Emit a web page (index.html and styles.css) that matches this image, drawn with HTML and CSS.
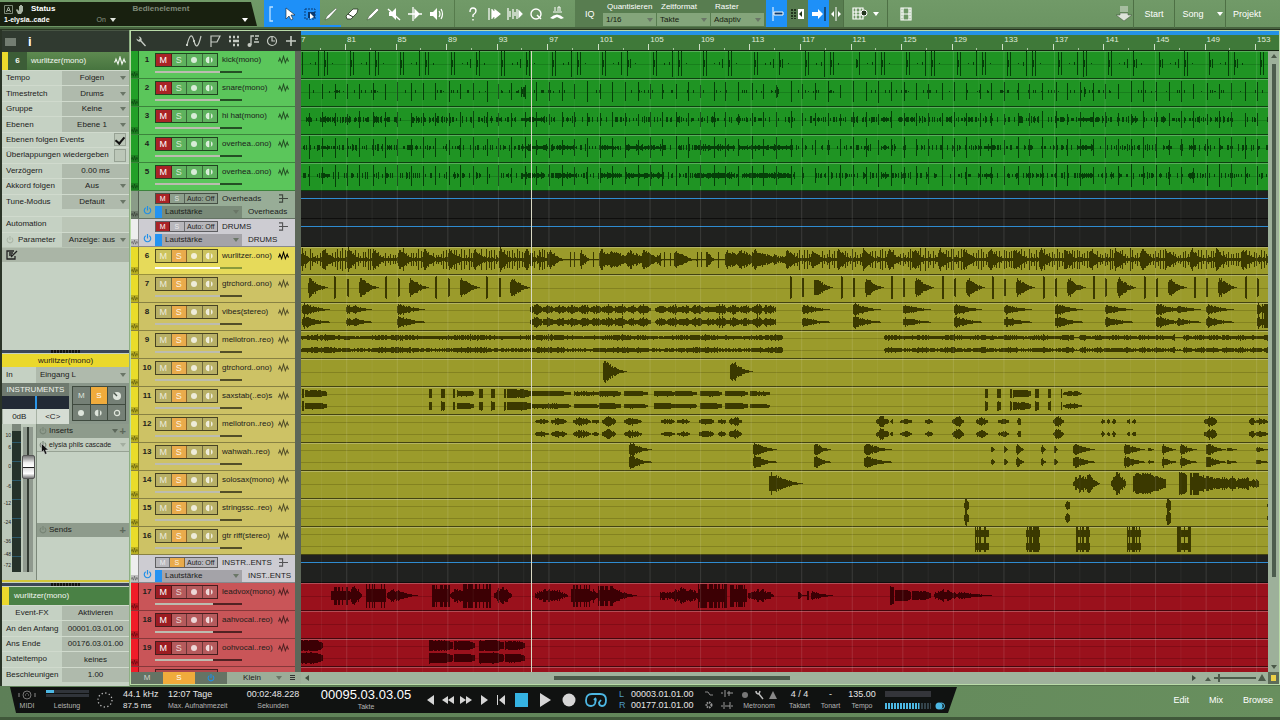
FILE: index.html
```html
<!DOCTYPE html>
<html lang="de">
<head>
<meta charset="utf-8">
<title>Song</title>
<link rel="stylesheet" href="styles.css">
</head>
<body>
<svg class="sprites" aria-hidden="true">
  <symbol id="i-wave" viewBox="0 0 12 10"><path d="M0 6h1l1-3 2 5 2-7 2 7 2-5 1 3h1" fill="none" stroke="currentColor" stroke-width="1.1"/></symbol>
  <symbol id="i-bus" viewBox="0 0 12 10"><path d="M1 1h4v8H1M1 5h10" fill="none" stroke="currentColor" stroke-width="1.2"/></symbol>
  <symbol id="i-power" viewBox="0 0 10 10"><path d="M3 2a3.6 3.6 0 1 0 4 0M5 0v5" fill="none" stroke="currentColor" stroke-width="1.3"/></symbol>
  <symbol id="i-dot" viewBox="0 0 10 10"><circle cx="5" cy="5" r="3" fill="currentColor"/></symbol>
  <symbol id="i-ring" viewBox="0 0 10 10"><circle cx="5" cy="5" r="2.6" fill="none" stroke="currentColor" stroke-width="1.2"/></symbol>
  <symbol id="i-mon" viewBox="0 0 10 10"><path d="M4 2a3 3 0 0 0 0 6zM6 2.500a3 3 0 0 1 0 5" fill="currentColor" stroke="currentColor" stroke-width=".6"/></symbol>
  <symbol id="i-knob" viewBox="0 0 10 10"><circle cx="5" cy="5" r="4" fill="currentColor"/><path d="M5 5L2 2" stroke="#4a554b" stroke-width="1.4"/></symbol>
  <symbol id="i-wrench" viewBox="0 0 12 12"><path d="M1.500 3.500l2 1.500 1.500-1.500L3.500 1.500a3 3 0 0 1 3 4L11 10.500 10 11.500 5.500 6.500a3 3 0 0 1-4-3z" fill="currentColor"/></symbol>
</svg>
<div class="app">
  <header class="topbar">
    <div class="status">
      <div class="status-line">
        <svg viewBox="0 0 22 10" width="22" height="10"><path d="M.5 1.500h8v8h-8z" fill="none" stroke="#7d8a78"/><path d="M2.500 8L4.500 3l2 5M3.500 6.500h2" fill="none" stroke="#a9b4a4"/><path d="M13 5l2 2V2h1v3V1h1v4V1h1v4V2h1v5l-2 3h-3l-2-4z" fill="#a9b4a4"/></svg>
        <b>Status</b><b class="dim">Bedienelement</b>
      </div>
      <div class="status-line small"><b>1-elysia..cade</b><span class="on">On <i class="caret"></i></span><i class="caret"></i></div>
    </div>
    <div class="tools blue">
      <button class="narrow" aria-label="Gruppe"><svg viewBox="0 0 6 16" width="6" height="16"><path d="M5 1H2v14h3" fill="none" stroke="#bfe2ff" stroke-width="1.300"/></svg></button>
      <button aria-label="Pfeil"><svg viewBox="0 0 16 16" width="16" height="16"><path d="M5 2v11l3-3 2 4 2-1-2-4h4z" fill="#fff" stroke="#123" stroke-width=".6"/></svg></button>
      <button aria-label="Bereich"><svg viewBox="0 0 16 16" width="16" height="16"><path d="M3 3h10v10H3z" fill="none" stroke="#0b3a70" stroke-dasharray="2 1"/><path d="M6 6h7v6H6z" fill="#0b3a70"/><path d="M8 7v6l4-2z" fill="#fff"/></svg></button>
    </div>
    <div class="tools">
      <button class="under" aria-label="Teilen"><svg viewBox="0 0 16 16" width="16" height="16"><path d="M2 14l2-4 9-8 1 1-8 9z" fill="#fff" stroke="#23351e" stroke-width=".4"/></svg></button>
      <button aria-label="Radierer"><svg viewBox="0 0 16 16" width="16" height="16"><path d="M2 10L9 3h5l-1 4-6 6H3z" fill="#fff" stroke="#23351e" stroke-width=".8"/><path d="M4 8l5 3" stroke="#23351e"/></svg></button>
      <button aria-label="Stift"><svg viewBox="0 0 16 16" width="16" height="16"><path d="M2 14l2-4 8-8 2 2-8 8z" fill="#fff" stroke="#23351e" stroke-width=".4"/></svg></button>
      <button aria-label="Stumm"><svg viewBox="0 0 16 16" width="16" height="16"><path d="M3 6h3l4-4v12l-4-4H3z" fill="#fff"/><path d="M2 3l12 11" stroke="#fff" stroke-width="1.400"/></svg></button>
      <button aria-label="Biegen"><svg viewBox="0 0 16 16" width="16" height="16"><path d="M1 8h14M6 1v14M8 4l4 4-4 4z" fill="#fff" stroke="#fff" stroke-width="1.300"/></svg></button>
      <button aria-label="Hören"><svg viewBox="0 0 16 16" width="16" height="16"><path d="M2 6h3l4-4v12l-4-4H2z" fill="#fff"/><path d="M11 5q2 3 0 6M13 3q3 5 0 10" fill="none" stroke="#fff" stroke-width="1.200"/></svg></button>
    </div>
    <div class="tools second">
      <button aria-label="Hilfe"><svg viewBox="0 0 16 16" width="16" height="16"><path d="M5 6q0-4 3-4t3 3q0 2-3 4v2M8 13v1.500" fill="none" stroke="#fff" stroke-width="1.400"/></svg></button>
      <button aria-label="Transienten"><svg viewBox="0 0 16 16" width="16" height="16"><path d="M3 2v12M6 3v10M6 4l4 4-4 4M9 4l5 4-5 4z" fill="#fff" stroke="#fff" stroke-width="1.200"/></svg></button>
      <button aria-label="Strip Silence"><svg viewBox="0 0 16 16" width="16" height="16"><path d="M1 2v12M3 5v6M6 3v10M8 6v4M12 5l3 3-3 3zM10 3v10" fill="#fff" stroke="#fff" stroke-width="1.200"/></svg></button>
      <button aria-label="Quantisieren"><svg viewBox="0 0 16 16" width="16" height="16"><circle cx="8" cy="8" r="5" fill="none" stroke="#fff" stroke-width="1.400"/><path d="M9 9l4 4" stroke="#fff" stroke-width="1.400"/></svg></button>
      <button aria-label="Makro"><svg viewBox="0 0 16 16" width="16" height="16"><path d="M6 1v4M9 5V1h2v4M4 6h9" fill="none" stroke="#fff"/><path d="M1 12q7-7 14 0l-3 1-4-2-4 2z" fill="#fff"/></svg></button>
    </div>
    <div class="quant">
      <span class="iq">IQ</span>
      <label>Quantisieren<span class="sel"><select><option>1/16</option></select></span></label>
      <label>Zeitformat<span class="sel"><select><option>Takte</option></select></span></label>
      <label>Raster<span class="sel"><select><option>Adaptiv</option></select></span></label>
    </div>
    <div class="tools snap">
      <button class="active" aria-label="Einrasten"><svg viewBox="0 0 16 16" width="16" height="16"><path d="M4 1v14" stroke="#fff"/><path d="M5 6h9v3H5z" fill="#0b3a70" stroke="#fff"/></svg></button>
      <button aria-label="Autoscroll"><svg viewBox="0 0 16 16" width="16" height="16"><path d="M2 3v10M5 3v10" stroke="#21351c" stroke-width="2" stroke-dasharray="2 1"/><path d="M8 3h6v10H8z" fill="#fff"/><path d="M12 5v6L9 8z" fill="#21351c"/></svg></button>
      <button class="active" aria-label="Folgen"><svg viewBox="0 0 16 16" width="16" height="16"><path d="M1 6h6V3l5 5-5 5v-3H1z" fill="#fff"/><path d="M14 1v14" stroke="#123" stroke-width="1.200"/></svg></button>
      <button class="narrow" aria-label="Cursor"><svg viewBox="0 0 10 16" width="10" height="16"><path d="M5 1v14" stroke="#fff"/><path d="M0 8l3-3v6zM10 8L7 5v6z" fill="#fff"/></svg></button>
    </div>
    <div class="tools wide">
      <button aria-label="Ansicht"><svg viewBox="0 0 16 14" width="16" height="14"><path d="M1 1h10v11H1zM1 5h10M1 8h10M4 1v11M8 1v11" fill="none" stroke="#fff" stroke-width="1.200"/><circle cx="12" cy="6" r="3" fill="#23351e" stroke="#fff"/></svg><i class="caret"></i></button>
      <button aria-label="Video"><svg viewBox="0 0 12 14" width="12" height="14"><path d="M1 1h10v12H1zM3 1v12M9 1v12M3 7h6M1 4h2M1 7h2M1 10h2M9 4h2M9 7h2M9 10h2" fill="none" stroke="#fff" stroke-width="1.200"/></svg></button>
    </div>
    <nav class="pages">
      <svg viewBox="0 0 18 16" width="18" height="16"><path d="M5 1h8M5 3h8M5 5h8" stroke="#dde3da"/><path d="M5 7h8v2h4l-8 6-8-6h4z" fill="#dde3da" stroke="#3f5039" stroke-width=".5"/></svg>
      <a href="#start">Start</a><a href="#song">Song<i class="caret"></i></a><a href="#projekt">Projekt</a>
    </nav>
  </header>

  <main class="work">
    <aside class="side">
      <div class="side-head"><i class="list"></i><b>i</b></div>
      <div class="title"><span class="num">6</span><span>wurlitzer(mono)</span><svg width="12" height="10"><use href="#i-wave"/></svg></div>
      <div class="form nine">
        <label>Tempo<span class="sel"><select><option>Folgen</option></select></span></label>
        <label>Timestretch<span class="sel"><select><option>Drums</option></select></span></label>
        <label>Gruppe<span class="sel"><select><option>Keine</option></select></span></label>
        <label>Ebenen<span class="sel"><select><option>Ebene 1</option></select></span></label>
        <label class="check">Ebenen folgen Events<input type="checkbox" checked></label>
        <label class="check">Überlappungen wiedergeben<input type="checkbox"></label>
        <label>Verzögern<input type="text" value="0.00 ms"></label>
        <label>Akkord folgen<span class="sel"><select><option>Aus</option></select></span></label>
        <label>Tune-Modus<span class="sel"><select><option>Default</option></select></span></label>
      </div>
      <div class="form auto">
        <div class="plain">Automation<span class="soft"></span></div>
        <label><span class="param"><svg width="8" height="8"><use href="#i-power"/></svg>Parameter</span><span class="sel"><select><option>Anzeige: aus</option></select></span></label>
      </div>
      <div class="notes"><svg viewBox="0 0 12 10" width="12" height="10"><path d="M8 1H1v8h8V6M3 3h4M3 5h3M5 7l6-6" fill="none" stroke="#222" stroke-width="1.300"/></svg></div>
      <div class="filler"></div>
      <div class="grip"></div>
      <section class="channel">
        <h2>wurlitzer(mono)</h2>
        <label class="input">In<span class="sel"><select><option>Eingang L</option></select></span></label>
        <div class="ch-top">
          <div class="ch-left">
            <div class="bus">INSTRUMENTS</div>
            <div class="pan"><i></i></div>
            <div class="vals"><span>0dB</span><span>&lt;C&gt;</span></div>
          </div>
          <div class="ch-btns">
            <button>M</button><button class="solo">S</button><button aria-label="Panorama"><svg width="10" height="10"><use href="#i-knob"/></svg></button>
            <button aria-label="Aufnahme"><svg width="10" height="10"><use href="#i-dot"/></svg></button><button aria-label="Monitor"><svg width="10" height="10"><use href="#i-mon"/></svg></button><button aria-label="Mono"><svg width="10" height="10"><use href="#i-ring"/></svg></button>
          </div>
        </div>
        <div class="ch-body">
          <div class="fader">
            <div class="scale"><span>10</span><span>6</span><span>0</span><span>-6</span><span>-12</span><span>-24</span><span>-36</span><span>-48</span><span>-72</span></div>
            <div class="meter"></div>
            <input type="range" min="0" max="100" value="77" aria-label="Lautstärke">
          </div>
          <div class="racks">
            <div class="rack-head"><svg width="8" height="8"><use href="#i-power"/></svg><span>Inserts</span><i class="caret"></i><b>+</b></div>
            <div class="rack-item"><svg width="8" height="8"><use href="#i-power"/></svg><span>elysia phils cascade</span><i class="caret"></i>
              <svg class="pointer" viewBox="0 0 8 12" width="8" height="12"><path d="M.5.5v9l2-2 1.500 4 2-1-1.500-3.500h3z" fill="#111" stroke="#eee" stroke-width=".5"/></svg></div>
            <div class="rack-space"></div>
            <div class="rack-head"><svg width="8" height="8"><use href="#i-power"/></svg><span>Sends</span><b>+</b></div>
            <div class="rack-end"></div>
          </div>
        </div>
      </section>
      <div class="grip"></div>
      <div class="title event"><span>wurlitzer(mono)</span></div>
      <div class="form five">
        <div class="plain"><span class="fx">Event-FX</span><button>Aktivieren</button></div>
        <label>An den Anfang<input type="text" value="00001.03.01.00"></label>
        <label>Ans Ende<input type="text" value="00176.03.01.00"></label>
        <label>Dateitempo<input type="text" value="keines"></label>
        <label>Beschleunigen<input type="text" value="1.00"></label>
      </div>
    </aside>

    <section class="arranger">
      <div class="list-head">
        <svg viewBox="0 0 12 12" width="12" height="12"><use href="#i-wrench"/></svg><span class="grow"></span>
        <svg viewBox="0 0 16 12" width="16" height="12"><path d="M1 10Q5-6 8 6t7-5" fill="none" stroke="currentColor" stroke-width="1.200"/><path d="M0 9h2v2H0zM7 5h2v2H7z" fill="currentColor"/></svg>
        <svg viewBox="0 0 12 12" width="12" height="12"><path d="M2 12V1h9L8 7H2" fill="none" stroke="currentColor" stroke-width="1.200"/></svg>
        <svg viewBox="0 0 12 12" width="12" height="12"><path d="M1 2h2M5 2h2M9 2h2M1 6h2M5 6h6M5 10h2M9 10h2" stroke="currentColor" stroke-width="2.400"/></svg>
        <svg viewBox="0 0 12 12" width="12" height="12"><path d="M4 10V1h3M8 1h4M8 4h3M7 7h5" fill="none" stroke="currentColor" stroke-width="1.300"/><circle cx="2.500" cy="10" r="2" fill="currentColor"/></svg>
        <svg viewBox="0 0 12 12" width="12" height="12"><circle cx="6" cy="6" r="4.500" fill="none" stroke="currentColor" stroke-width="1.200"/><path d="M6 2v4h3" fill="none" stroke="currentColor" stroke-width="1.200"/></svg>
        <svg viewBox="0 0 12 12" width="12" height="12"><path d="M6 1v10M1 6h10" stroke="currentColor" stroke-width="1.600"/></svg>
      </div>
      <div class="ruler" id="ruler"></div>
      <div class="tracks" id="tracks"></div>
      <div class="timeline"><div id="lanes"></div><svg class="grid" id="grid" viewBox="0 0 966 622" preserveAspectRatio="none"></svg><i class="playhead"></i></div>
      <div class="vscroll"><i class="up"></i><i class="thumb"></i><i class="rest"></i><i class="down"></i></div>
      <div class="list-foot">
        <button>M</button><button class="solo">S</button><button class="pw" aria-label="Automation"><svg width="8" height="8"><use href="#i-power"/></svg></button>
        <span class="sel"><select aria-label="Spurhöhe"><option>Klein</option></select></span><i class="menu"></i>
      </div>
      <div class="hscroll"><i class="left"></i><span class="bar"><i></i></span><i class="right"></i><svg viewBox="0 0 62 10" width="62" height="10"><path d="M1 8l3-4 3 4zM54 8l4-7 4 7z" fill="#4d5c4b"/><path d="M10 5h42" stroke="#4d5c4b" stroke-width="2"/><path d="M15 1v8" stroke="#4d5c4b" stroke-width="2"/></svg></div>
      <div class="corner"></div>
    </section>
  </main>

  <footer class="bottom">
    <div class="transport">
      <div class="cell w30"><svg viewBox="0 0 18 10" width="18" height="10"><circle cx="9" cy="5" r="4" fill="none" stroke="#777"/><path d="M1 3v4M17 3v4M7 5h1M10 5h1M9 3v1" stroke="#888"/></svg><small>MIDI</small></div>
      <div class="cell w50"><span class="load"><i></i><i></i></span><small>Leistung</small></div>
      <div class="cell w26"><svg viewBox="0 0 18 18" width="18" height="18"><circle cx="9" cy="9" r="7" fill="none" stroke="#b9b9b9" stroke-width="1.300" stroke-dasharray="1.300 2.366"/></svg></div>
      <div class="cell start w45"><span>44.1 kHz</span><span class="sm">87.5 ms</span></div>
      <div class="cell start w73"><span>12:07 Tage</span><small>Max. Aufnahmezeit</small></div>
      <div class="cell w74"><span>00:02:48.228</span><small>Sekunden</small></div>
      <div class="cell w112"><span class="big">00095.03.03.05</span><small>Takte</small></div>
      <div class="ctrl">
        <button aria-label="Zurück"><svg viewBox="0 0 10 12" width="10" height="12"><path d="M8 1v10L1 6z"/></svg></button>
        <button aria-label="Rückspulen"><svg viewBox="0 0 12 12" width="12" height="12"><path d="M6 2v8L0 6zM12 2v8L6 6z"/></svg></button>
        <button aria-label="Vorspulen"><svg viewBox="0 0 12 12" width="12" height="12"><path d="M0 2v8l6-4zM6 2v8l6-4z"/></svg></button>
        <button aria-label="Vor"><svg viewBox="0 0 10 12" width="10" height="12"><path d="M2 1v10l7-5z"/></svg></button>
        <button aria-label="Zum Anfang"><svg viewBox="0 0 10 12" width="10" height="12"><path d="M1 1h1v10H1zM9 1v10L3 6z"/></svg></button>
        <button class="xl stop" aria-label="Stopp"><svg viewBox="0 0 14 14" width="14" height="14"><path d="M0 0h13v14H0z"/></svg></button>
        <button class="xl" aria-label="Wiedergabe"><svg viewBox="0 0 12 14" width="12" height="14"><path d="M1 0v14l11-7z"/></svg></button>
        <button class="xl" aria-label="Aufnahme"><svg viewBox="0 0 14 14" width="14" height="14"><circle cx="7" cy="7" r="6.500"/></svg></button>
        <button class="xxl" aria-label="Schleife"><svg viewBox="0 0 22 16" width="22" height="16"><path d="M6 14Q1 14 1 8.500 1 2 7 2h8q6 0 6 6 0 6-4 6-3 0-3-3.500L16 8M6 14q3 0 4-2.500L11 7M9 8l2-2" fill="none" stroke="#4db8e4" stroke-width="1.800"/></svg></button>
      </div>
      <div class="loc"><b>L</b><span>00003.01.01.00</span><b>R</b><span>00177.01.01.00</span></div>
      <div class="cell w18"><svg viewBox="0 0 10 24" width="10" height="24"><path d="M1 4h3l2 3h3" fill="none" stroke="#888"/><circle cx="5" cy="17" r="2.500" fill="none" stroke="#999" stroke-width="2" stroke-dasharray="1.500 .8"/></svg></div>
      <div class="cell w18"><svg viewBox="0 0 12 24" width="12" height="24"><path d="M0 5h2M4 2v7M6 5h6M8 3v5M0 18h2M3 14v7M9 14v7M4 18h5M10 18h2" stroke="#999"/></svg></div>
      <div class="cell w46"><svg viewBox="0 0 38 10" width="38" height="10"><circle cx="5" cy="5" r="3" fill="#777"/><path d="M16 1q0 3 3 3l4 5M19 4l1-3" fill="none" stroke="#bbb" stroke-width="1.500"/><path d="M33 1l4 8h-8z" fill="#888"/></svg><small>Metronom</small></div>
      <div class="cell w35"><span>4 / 4</span><small>Taktart</small></div>
      <div class="cell w27"><span>-</span><small>Tonart</small></div>
      <div class="cell w36"><span>135.00</span><small>Tempo</small></div>
      <div class="out">
        <svg viewBox="0 0 60 22" width="60" height="22"><path d="M0 2h46v6H0z" fill="#34353a"/><path d="M0 17h34.500" stroke="#4db8e4" stroke-width="6" stroke-dasharray="2 1"/><path d="M36 17h10" stroke="#33434b" stroke-width="6" stroke-dasharray="2 1"/><circle cx="54" cy="17" r="3.500" fill="#4db8e4"/><circle cx="56.500" cy="17" r="3" fill="none" stroke="#4db8e4"/></svg>
      </div>
    </div>
    <nav class="views"><a href="#edit">Edit</a><a href="#mix">Mix</a><a href="#browse">Browse</a></nav>
  </footer>
</div>
<script src="app.js"></script>
</body>
</html>
```
FILE: styles.css
```css
* { box-sizing: border-box; }
body { margin: 0; font: 8px/12px "Liberation Sans", Arial, sans-serif; color: #1c211b; background: #56754f; }
button, select, input { font: inherit; color: inherit; margin: 0; padding: 0; border: 0; background: none; border-radius: 0; appearance: none; min-width: 0; }
a { color: inherit; text-decoration: none; }
h2 { margin: 0; font: inherit; }
svg { display: block; flex: none; }
.sprites { position: absolute; width: 0; height: 0; }
.app { display: flex; flex-direction: column; height: 100vh; overflow: hidden; }
.caret { display: inline-block; flex: none; width: 0; height: 0; border: 3px solid transparent; border-top: 4px solid currentColor; border-bottom: 0; }

.topbar { display: flex; flex: none; height: 30px; padding-bottom: 2px; background: linear-gradient(#719a68, #6b9462); border-bottom: 1px solid #26331f; color: #fff; box-shadow: inset 0 -2px #47633f; }
.status { width: 257px; margin: 2px 7px 1px 0; padding: 1px 9px 0 4px; background: #18200f; clip-path: polygon(0 0, 251px 0, 100% 100%, 0 100%); }
.status-line { display: flex; align-items: center; height: 12px; }
.status-line svg { margin-right: 5px; }
.status-line .dim { margin-left: 77px; color: #7f8a78; }
.status-line.small { font-size: 7px; height: 10px; }
.on { flex: 1; margin-left: 47px; color: #8c9785; }
.on .caret { margin-left: 2px; color: #dfe5dc; }
.tools { display: flex; }
.tools button { display: flex; align-items: center; justify-content: center; width: 21px; }
.tools .narrow { width: 14px; }
.blue, .tools .active { background: #1e90f8; }
.tools .under { box-shadow: inset 0 -2px #1e90f8; }
.tools.second { margin-left: 8px; padding-left: 7px; padding-right: 8px; border-left: 1px solid #567b4c; }
.quant { display: flex; width: 190px; padding-left: 10px; background: #587d50; }
.quant .iq { width: 18px; line-height: 28px; font-size: 9px; }
.quant label { display: flex; flex: 1; flex-direction: column; padding-top: 1px; padding-right: 1px; text-indent: 4px; }
.snap { background: #587d50; padding-left: 1px; }
.wide { border-left: 1px solid #4e7045; }
.wide button { width: 43px; gap: 5px; }
.wide button + button { width: 36px; border-left: 1px solid #4e7045; }
.pages { display: flex; flex: 1; justify-content: flex-end; align-items: center; padding-right: 12px; font-size: 9px; }
.pages a { display: flex; align-items: center; justify-content: center; gap: 13px; height: 28px; width: 41px; border-left: 1px solid #4e7045; }
.pages a:nth-of-type(2) { width: 51px; padding-left: 5px; }
.pages a:nth-of-type(3) { width: 43px; }

.sel { position: relative; display: flex; align-items: center; height: 13px; }
.sel::after { content: ""; position: absolute; right: 3px; border: 3px solid transparent; border-top: 4px solid #6a7667; border-bottom: 0; }
.sel select { width: 100%; height: 100%; text-align-last: center; padding-right: 8px; }
.quant .sel { background: #84a57b; color: #16200f; }
.quant .sel select { text-align-last: left; text-indent: 3px; }

.work { display: flex; flex: 1; min-height: 0; }
.side { display: flex; flex-direction: column; width: 130px; flex: none; padding-bottom: 4px; border-left: 2px solid #2a3427; border-right: 1px solid #8daf83; background: #c5d1c3; overflow: hidden; }
.side-head { display: flex; align-items: center; gap: 12px; flex: none; height: 22px; padding-left: 3px; background: #303a30; border-top: 1px solid #485544; color: #fff; font-size: 13px; }
.side-head .list { width: 11px; height: 8px; background: #737d72; }
.title { display: flex; align-items: center; flex: none; height: 18px; padding-right: 3px; border-left: 6px solid #ecd92c; background: linear-gradient(#5e8a50, #47743f); color: #f3f7f1; }
.title .num { width: 19px; margin-right: 4px; line-height: 18px; text-align: center; font-weight: bold; background: #3c5d37; }
.title svg { margin-left: auto; }
.form { display: grid; flex: none; }
.form.nine { height: 139px; grid-template-rows: repeat(9, 1fr); }
.form.auto { height: 31px; margin-top: 7px; grid-template-rows: 1fr 1fr; }
.form.five { height: 77px; grid-template-rows: repeat(5, 1fr); }
.form label, .plain { display: grid; grid-template-columns: 56px 1fr; align-items: center; padding-left: 4px; white-space: nowrap; border-top: 1px solid #d0dacd; min-height: 0; }
.form .sel, .form input[type=text], .plain button, .plain .soft { height: 100%; width: 100%; background: #afbaac; text-align: center; }
.plain .soft { background: #bbc6b7; }
.form .sel select { padding: 0 7px 0 0; }
.form .check { grid-template-columns: 1fr 15px; }
input[type=checkbox] { display: grid; place-items: center; width: 12px; height: 13px; border: 1px solid #97a294; background: #bcc7b8; }
input[type=checkbox]:checked::before { content: ""; width: 4px; height: 7px; border: solid #111; border-width: 0 2px 2px 0; transform: rotate(40deg); }
.param { display: flex; align-items: center; gap: 4px; }
.param svg { color: #aab5a6; }
.fx { text-align: center; padding-right: 4px; }
.notes { display: flex; align-items: center; flex: none; height: 15px; padding-left: 4px; background: #aab5a6; border-top: 1px solid #b9c5b5; }
.filler { flex: 1; }
.grip { flex: none; height: 3px; margin: 1px 0; background: repeating-linear-gradient(90deg, #111 0 2px, #444 2px 3px) center / 29px 100% no-repeat, #3c4656; }
.title.event { height: 18px; border-left-width: 7px; padding-left: 5px; background: #4a8145; }

.channel { flex: none; border-bottom: 2px solid #d3c53a; }
.channel h2 { height: 13px; text-align: center; background: #ead82c; line-height: 13px; }
.input { display: grid; grid-template-columns: 30px 1fr; align-items: center; height: 16px; padding-left: 4px; }
.input .sel { height: 16px; background: #afbaac; }
.input .sel select { text-align-last: left; padding-left: 4px; }
.ch-top { display: flex; height: 41px; background: #8a978a; }
.ch-left { width: 67px; }
.bus { height: 13px; background: #6f7a6f; color: #eef2ec; text-align: center; line-height: 14px; }
.pan { display: flex; justify-content: center; height: 13px; background: #222a35; }
.pan i { width: 2px; background: #2b96e8; }
.vals { display: flex; height: 15px; background: #d5ddd3; text-align: center; line-height: 15px; }
.vals span { flex: 1; border-left: 1px solid #a7b2a4; }
.ch-btns { display: grid; grid-template-columns: repeat(3, 1fr); gap: 1px; width: 54px; height: 35px; margin: 3px 0 0 3px; background: #3f4a3f; border: 1px solid #3f4a3f; }
.ch-btns button { display: flex; align-items: center; justify-content: center; background: #758076; color: #dfe5dc; }
.ch-btns .solo, .list-foot .solo { background: #f0ab3c; color: #fff; }
.ch-body { display: flex; height: 156px; }
.fader { display: flex; width: 34px; background: #bcc8b9; }
.scale { display: grid; grid-template-rows: 12px 19px 20px 17px 19px 19px 13px 11px 10px; width: 10px; padding-top: 5px; font-size: 5px; text-align: right; padding-right: 1px; }
.meter { width: 9px; height: 148px; background: linear-gradient(#7d887c 0 7px, transparent 7px), repeating-linear-gradient(#25322b 0 18px, #2d5a6c 18px 19px); }
.fader input { writing-mode: vertical-lr; direction: rtl; width: 13px; height: 145px; margin: 3px 0 0 1px; background: linear-gradient(90deg, transparent 1px, #8f998e 1px 5px, #333b33 5px 7px, #8f998e 7px 11px, transparent 11px); }
.fader input::-webkit-slider-thumb { appearance: none; width: 13px; height: 24px; border: 1px solid #555; border-radius: 2px; background: linear-gradient(#777, #eee 30%, #fff 48%, #222 48% 54%, #ddd 54%, #fff 80%, #777); }
.racks { display: flex; flex: 1; flex-direction: column; border-left: 1px solid #7c887a; }
.rack-head, .rack-item { display: flex; align-items: center; position: relative; height: 14px; padding: 0 3px 0 2px; gap: 2px; background: #8e9b8c; }
.rack-head .caret, .rack-head b, .rack-item .caret { color: #5c675a; }
.rack-head b { font-size: 11px; }
.rack-head span, .rack-item span { flex: 1; white-space: nowrap; }
.rack-head svg, .rack-item svg:first-child { color: #768374; }
.rack-item { font-size: 7px; background: #c1ccbe; border-bottom: 1px solid #97a294; }
.rack-item .caret { color: #a3aea0; }
.pointer { position: absolute; left: 4px; top: 5px; }
.rack-space { flex: 1; background: #c5d1c3; }
.rack-end { height: 43px; }

.arranger { display: grid; flex: 1; min-width: 0; grid-template-columns: 170px 1fr 11px; grid-template-rows: 20px 1fr 12px; border: 1px solid #b9dba8; background: #5d6b58; margin-bottom: 1px; }
.list-head { display: flex; align-items: center; gap: 7px; padding: 0 4px 0 4px; background: #2e372e; color: #c5cbc3; }
.grow { flex: 1; }
.ruler { grid-column: 2 / 4; display: flex; padding-right: 11px; background: #3f7939; border-top: 4px solid #2492e6; border-bottom: 1px solid #142410; color: #e0ecdc; overflow: hidden; }
.ruler span { flex: 50.5 0 0; min-width: 0; padding-left: 2px; line-height: 9px; background: linear-gradient(#cfe0c9, #cfe0c9) 0 100% / 1px 6px no-repeat, linear-gradient(#a9c4a1, #a9c4a1) 50% 100% / 1px 2px no-repeat; }
.ruler span:first-child { flex-grow: 45.7; padding-left: 0; background: linear-gradient(#a9c4a1, #a9c4a1) 45% 100% / 1px 2px no-repeat; }
.ruler span:last-child { flex-grow: 11.3; background-size: 1px 6px, 0 0; }
.tracks { overflow: hidden; min-height: 0; background: #5c6658; }
.track { display: flex; height: 28px; margin-right: 6px; border-bottom: 1px solid #0005; background: var(--bg); }
.strip { display: flex; flex-direction: column; justify-content: flex-end; width: 8px; background: var(--strip); border-right: 1px solid #0006; }
.strip svg { color: #0007; background: #0003; }
.track .no { width: 16px; text-align: center; font-weight: bold; line-height: 18px; }
.track .body { flex: 1; min-width: 0; }
.row { display: flex; align-items: center; height: 14px; margin-top: 2px; }
.btns { display: flex; width: 63px; height: 14px; margin-right: 4px; border: 1px solid #0009; background: #0002; color: #ffffffc0; font-size: 9px; }
.btns button { display: flex; flex: 1; align-items: center; justify-content: center; border-right: 1px solid #0006; background: #ffffff18; }
.btns button:last-child { border-right: 0; }
.btns .mute { background: #a92326; color: #fff; }
.btns .mute2 { background: #9c1c22; color: #fff; }
.btns .solo { background: #e9ab4c; color: #ffffffe0; }
.row .name { flex: 1; white-space: nowrap; }
.row > svg { margin-right: 6px; color: #0009; }
.sel-track .row > svg { color: #000; }
.vol { display: block; width: 87px; height: 2px; margin-top: 4px; background: linear-gradient(90deg, #bcbcb0 var(--v), #0009 var(--v)); }
.vol::-webkit-slider-thumb { appearance: none; width: 0; height: 0; }
.sel-track .vol { background: linear-gradient(90deg, #fff var(--v), #8a9a3c var(--v)); }
.bus-track .row { margin-top: 1px; height: 13px; }
.bus-track .row + .row { margin-top: 0; }
.bus-track .btns { height: 11px; font-size: 7px; border-color: #0007; }
.bus-track .btns .auto-mode { flex: 2 0 6px; color: #222; white-space: nowrap; }
.bus-track .no { display: flex; align-items: flex-end; justify-content: center; padding-bottom: 3px; color: #1f8fe8; }
.bus-track .env { border-left: 7px solid #2493f2; width: 87px; height: 12px; margin-right: 6px; background: #0003; }
.bus-track .env select { text-align-last: left; padding-left: 3px; }
.timeline { position: relative; overflow: hidden; min-height: 0; background: #20211f; }
.lane { height: 28px; border-bottom: 1px solid #00000090; background: var(--lane); box-shadow: inset 0 1px #ffffff40; }
.lane svg { width: 100%; height: 27px; }
.lane path { stroke: var(--ink); fill: none; shape-rendering: crispEdges; }
.lane .mid { stroke-opacity: .25; }
.lane.dark { background: linear-gradient(#2f8bd0, #2f8bd0) 0 7px / 100% 1px no-repeat, #20211f; box-shadow: none; }
.grid { position: absolute; inset: 0; width: 100%; height: 100%; }
.grid path { stroke: #fff; fill: none; shape-rendering: crispEdges; }
.playhead { position: absolute; top: 0; bottom: 0; left: 23.800%; width: 1px; background: #d8d8c4; }
.vscroll { display: flex; flex-direction: column; align-items: center; padding: 3px 0; background: #9db09a; }
.vscroll .up { border: 3px solid transparent; border-top: 0; border-bottom: 4px solid #4a5848; }
.vscroll .down { border: 3px solid transparent; border-bottom: 0; border-top: 4px solid #4a5848; }
.vscroll .thumb { flex: 511; width: 4px; margin-top: 6px; background: #4c5c4d; }
.vscroll .rest { flex: 88; }
.list-foot { display: flex; background: #9cad98; }
.list-foot button { display: flex; align-items: center; justify-content: center; width: 32px; background: #657364; color: #cfd6cc; }
.list-foot .pw { color: #1f8fe8; }
.list-foot .sel { width: 58px; height: 12px; }
.list-foot .menu { width: 5px; height: 5px; margin: 3px 0 0 5px; background: repeating-linear-gradient(#333 0 1px, transparent 1px 2px); }
.hscroll { display: flex; align-items: center; padding: 0 2px 0 4px; background: #9fb29c; }
.hscroll > i { border: 3px solid transparent; }
.hscroll .left { border-left: 0; border-right: 4px solid #3f4d3e; }
.hscroll .right { border-right: 0; border-left: 4px solid #3f4d3e; margin: 0 8px; }
.bar { display: flex; flex: 1; }
.bar i { width: 27%; height: 4px; margin-left: 28%; background: #4b5b4a; }
.corner { background: #ecd047 content-box; padding: 3px; }

.bottom { display: flex; flex: none; height: 34px; padding: 1px 0 4px 10px; background: linear-gradient(90deg, #5d7f57, #688f5e); border-bottom: 3px solid #40583a; }
.transport { display: flex; width: 947px; flex: none; background: #101211; color: #e6e6e6; clip-path: polygon(0 0, 100% 0, calc(100% - 9px) 100%, 6px 100%); padding-left: 2px; font-size: 9px; }
.cell { display: flex; flex: none; flex-direction: column; align-items: center; justify-content: center; white-space: nowrap; line-height: 11px; }
.cell small { font-size: 7px; line-height: 11px; color: #b4b4b4; }
.cell.start { align-items: flex-start; padding-left: 5px; }
.cell .sm { font-size: 8px; }
.cell .big { font-size: 13px; line-height: 13px; color: #fff; }
.w18 { width: 18px; } .w26 { width: 26px; } .w27 { width: 27px; } .w30 { width: 30px; } .w35 { width: 35px; } .w36 { width: 36px; }
.w45 { width: 45px; } .w46 { width: 46px; } .w50 { width: 50px; } .w73 { width: 73px; } .w74 { width: 74px; } .w112 { width: 112px; }
.load { display: grid; gap: 1px; width: 43px; margin-bottom: 3px; }
.load i { height: 3px; background: #30343a; }
.load i:first-child { background: linear-gradient(90deg, #4db8e4 8px, #30343a 8px); }
.ctrl { display: flex; width: 190px; flex: none; }
.ctrl button { display: flex; flex: 0 1 18px; align-items: center; justify-content: center; fill: #d6d6d6; }
.ctrl .xl { flex-basis: 24px; }
.ctrl .xxl { flex-basis: 32px; }
.ctrl .stop { fill: #35b3e2; }
.loc { display: grid; grid-template-columns: 12px 1fr; grid-template-rows: 11px 11px; align-content: center; width: 88px; padding-left: 7px; flex: none; line-height: 11px; }
.loc b { font-weight: normal; color: #4d9bc4; }
.out { display: flex; align-items: center; padding-left: 5px; }
.views { display: flex; flex: 1; justify-content: flex-end; align-items: center; gap: 20px; padding-right: 7px; color: #fff; font-size: 9px; }
```
FILE: app.js
```javascript
const ORIGIN = 301, WIDTH = 966;
let seed = 7;
const rnd = () => (seed = (seed * 16807) % 2147483647) / 2147483647;
const range = (n, fn) => Array.from({ length: n }, (_, i) => fn(i));
const BAR4 = 50.5;

// Clip kinds: d decay, b block, s swell, k spiky block, n thin noise
function column(kind, t, amp) {
  const r = rnd();
  if (kind === 'd') return amp * (t < .08 ? .6 + t * 5 : Math.pow(1 - t, 1.7)) * (.6 + .4 * r) + .5;
  if (kind === 'b') return amp * (t > .7 ? 1 - (t - .7) * 1.6 : 1) * (.85 + .15 * r);
  if (kind === 's') return amp * Math.sin(Math.PI * Math.min(1, t * .9 + .1)) * (.45 + .55 * r) + .5;
  if (kind === 'k') return r > .4 ? amp : amp * .55;
  return amp * (.5 + .5 * r) * (.8 + .2 * Math.sin(t * 40));
}
function clipPath(clips, centers) {
  let d = '';
  for (const [x0, x1, kind, amp] of clips) {
    const a = Math.round(x0 - ORIGIN), b = Math.min(WIDTH, Math.round(x1 - ORIGIN));
    for (let x = Math.max(0, a); x < b; x++) {
      const h = Math.max(.5, column(kind, (x - a) / Math.max(1, b - a), amp));
      for (const c of centers) d += `M${x + .5} ${(c - h).toFixed(1)}v${(2 * h).toFixed(1)}`;
    }
  }
  return d;
}
const spike = (x, amp, w = 1) => [x, x + w, 'b', amp];
const decays = (xs, len, amp) => xs.map(x => [x, x + len, 'd', amp]);

const kick = range(20, k => 296.200 + k * BAR4).flatMap(x => [3, 6, 22, 28, 31].map(o => spike(x + o, rnd() > .2 ? 13 : 5)).concat([spike(x + 4, 4), spike(x + 29, 4), spike(x + 14, 1), spike(x + 19, 2), spike(x + 36, 1)]));
const beats = amp => range(77, k => spike(309 + k * 12.620 - 12.620 + (k % 3 ? 0 : 1), amp * (.7 + .3 * rnd())));
const dots = (amp, p) => range(WIDTH, i => i).filter(() => rnd() < p).map(i => spike(ORIGIN + i, amp * (.4 + .6 * rnd())));
const blur = (amp, zones) => zones.map(([a, b]) => [a, b, 'n', amp]);
const zones = [[321, 330], [521, 545], [556, 577], [601, 618], [625, 664], [694, 735], [742, 790], [880, 888], [983, 990], [1078, 1092], [1188, 1194]];

function wurli(x) {
  const out = [[x, x + 17, 'd', 14], [x + 25, x + 42, 'd', 13], [x, x + 50.500, 'n', 3]];
  for (let o = 3; o < 50; o += 2.500) out.push(spike(x + o, 4 + 8 * rnd()));
  return out;
}
const lumps = (x, n, amp) => range(n, i => [x + i * 12, x + i * 12 + 13, 's', amp * (.5 + .5 * rnd())]);
const at = (xs, kind, amp) => xs.map(([a, b, m]) => [a, b, kind, m || amp]);

const waves = {
  1: [kick], 2: [[...beats(11), ...dots(2, .14), ...at([[521, 526], [776, 779], [1083, 1085]], 'k', 5)]],
  3: [[...beats(9), ...dots(3.500, .45), ...blur(3, [zones[0], zones[1], zones[7], zones[9]])]],
  4: [[...beats(12), ...dots(3.500, .38), ...blur(2.500, zones)]],
  5: [[...beats(12), ...dots(3.500, .38), ...blur(3.500, zones)]],
  6: [[...range(5, k => 296.500 + k * BAR4).flatMap(wurli), ...at([[548, 565], [580, 590], [599, 626], [610, 640], [626, 655], [642, 664], [674, 695], [706, 715], [725, 752], [738, 770], [752, 789]], 'd', 12), ...at([[538, 545], [599, 660], [725, 785]], 'n', 5.500), ...[540, 544, 570, 574, 593, 660, 664, 670, 697, 701, 718].map(x => spike(x, 8)), [531, 785, 'n', 1], ...range(10, k => 801 - 16 + k * BAR4).flatMap(wurli)]],
  7: [[...decays(range(5, k => 308 + k * BAR4), 20, 12), ...decays(range(9, k => 813 + k * BAR4), 19, 12), ...range(4, k => [spike(334 + k * BAR4, 12, 2), spike(347 + k * BAR4, 10, 2)]).flat(), ...range(10, k => [spike(789 + k * BAR4, 12, 2), spike(801 + k * BAR4, 10, 2)]).flat()]],
  8: [[...decays([302, 397], 28, 7), ...decays([346, 352], 20, 5), ...lumps(530, 10, 6.500), [530, 640, 'n', 3], ...lumps(655, 10, 6.500), [655, 776, 'n', 3], ...range(10, k => [801 + k * BAR4, 829 + k * BAR4, 'd', k % 2 ? 7 : 5.500]), [1176, 1200, 'd', 4], [1261, 1267, 'k', 6]], 1],
  9: [at([[301, 783], [883, 1073], [1078, 1174], [1182, 1267]], 'n', 3.200).concat([[1073, 1080, 'n', 1], [1174, 1182, 'n', 1]]), 1],
  10: [at([[603, 627], [730, 753]], 'd', 13)],
  11: [at([[302, 304], [305, 327, 3.500], [429, 432], [441, 445], [453, 455], [457, 474, 3.200], [479, 483], [491, 495], [504, 506], [507, 532, 4.500], [532, 571, 2.600], [574, 600, 2.200], [599, 621, 3], [624, 648, 2.500], [654, 675, 3], [675, 697, 2.500], [700, 722, 3], [725, 748, 3], [750, 770, 2.200], [984, 987], [996, 1000], [1009, 1011], [1012, 1030, 4], [1034, 1038], [1047, 1050], [1060, 1061]], 'b', 4.800).concat([[1062, 1081, 's', 2.500]]), 1],
  12: [at([[535, 549], [551, 567, 3.500], [573, 591, 4], [592, 599], [602, 616, 5], [624, 642, 3.500], [661, 675], [677, 690], [699, 714, 3.500], [718, 726], [729, 742, 4.500], [875, 888, 5.500], [889, 892], [899, 911], [924, 932], [951, 963, 5.500], [975, 987, 4], [997, 1008], [1016, 1020, 4], [1052, 1063, 5.500], [1100, 1104], [1106, 1109], [1111, 1115], [1126, 1129], [1131, 1135], [1203, 1216, 5.500], [1248, 1254, 4], [1254, 1267, 3]], 's', 2.500), 1],
  13: [at([[629, 652, 8], [753, 777, 8], [813, 830, 7], [863, 891, 7], [990, 994], [1003, 1007], [1015, 1023, 7], [1040, 1045, 6], [1053, 1057, 6], [1072, 1094, 7], [1123, 1144, 7], [1147, 1153, 2], [1161, 1175, 6], [1179, 1196, 6], [1205, 1225, 7], [1226, 1236, 2], [1255, 1267, 3]], 'd', 5), 1],
  14: [[[769, 802, 'd', 13], [1072, 1088, 's', 10], [1074, 1088, 'n', 7], [1086, 1099, 'd', 13], [1110, 1125, 's', 12], [1111, 1122, 'n', 9], [1132, 1165, 'b', 8], [1134, 1156, 'b', 10.500], [1178, 1186, 'b', 12], [1189, 1198, 'k', 11], [1196, 1258, 'd', 10], [1196, 1248, 'n', 8], [1240, 1258, 'n', 6]]],
  15: [at([[963, 968], [1064, 1069], [1165, 1170], [1266, 1269]], 's', 8), 1],
  16: [at([974, 1025, 1075, 1126, 1176].map(x => [x, x + 14]), 'k', 6.400), 1],
  17: [[[331, 350, 'k', 9], [348, 362, 's', 9], [366, 386, 'k', 12], [387, 405, 's', 7], [396, 418, 'd', 6], [432, 450, 'k', 11], [450, 466, 's', 7], [463, 491, 'k', 12], [494, 512, 's', 9], [535, 568, 's', 7], [571, 590, 'k', 11], [584, 598, 's', 8], [598, 614, 'k', 10], [612, 637, 'd', 9], [660, 668, 'k', 4], [668, 702, 's', 8], [698, 727, 'k', 12], [730, 747, 'k', 11], [748, 774, 's', 7], [797, 802, 'd', 6], [802, 806, 'n', 1], [806, 808, 'b', 5], [810, 832, 'd', 5], [889, 893, 'b', 10], [894, 910, 'b', 6], [911, 930, 'b', 4.500], [933, 957, 's', 6], [933, 957, 'n', 4], [957, 991, 'd', 4]]],
  18: [[]],
  19: [at([[301, 323], [429, 453], [454, 475, 4.500], [479, 504], [505, 525, 4.500]], 'b', 5.600), 1],
  20: [[]]
};

const GREEN = ['#5bc65b', '#22a028', '#1f9423', '#053f08'];
const YELLOW = ['#cdc265', '#e9dc2a', '#9b9b2b', '#3b3900'];
const RED = ['#c95558', '#f01c28', '#9a111c', '#3c0004'];
const tracks = [
  [1, 'kick(mono)', GREEN], [2, 'snare(mono)', GREEN], [3, 'hi hat(mono)', GREEN], [4, 'overhea..ono)', GREEN], [5, 'overhea..ono)', GREEN],
  ['bus', 'Overheads', ['#98ad97', '#8a9c88'], 'Overheads', 1], ['bus', 'DRUMS', ['#cdccd2', '#eeeeee'], 'DRUMS', 1],
  [6, 'wurlitzer..ono)', ['#e6da5a', ...YELLOW.slice(1)]], [7, 'gtrchord..ono)', YELLOW], [8, 'vibes(stereo)', YELLOW], [9, 'mellotron..reo)', YELLOW],
  [10, 'gtrchord..ono)', YELLOW], [11, 'saxstab(..eo)s', YELLOW], [12, 'mellotron..reo)', YELLOW], [13, 'wahwah..reo)', YELLOW],
  [14, 'solosax(mono)', YELLOW], [15, 'stringssc..reo)', YELLOW], [16, 'gtr riff(stereo)', YELLOW],
  ['bus', 'INSTR..ENTS', ['#cdccd2', '#eeeeee'], 'INST..ENTS', 0],
  [17, 'leadvox(mono)', RED], [18, 'aahvocal..reo)', RED], [19, 'oohvocal..reo)', RED], [20, '', RED]
];
const icon = (id, w = 10, h = 10) => `<svg width="${w}" height="${h}"><use href="#i-${id}"/></svg>`;

function header([no, name, [bg, strip], out, muted]) {
  const open = cls => `<div class="track ${cls}" style="--bg:${bg};--strip:${strip}"><span class="strip">${icon('wave', 7, 7)}</span>`;
  if (!name) return open('') + '<span class="no"></span><div class="body"><div class="row"><span class="btns"></span></div></div></div>';
  if (no === 'bus') return open('bus-track') + `<span class="no">${icon('power', 9, 9)}</span><div class="body">
    <div class="row"><span class="btns"><button class="${muted ? 'mute' : ''}">M</button><button class="${muted ? '' : 'solo'}">S</button><button class="auto-mode">Auto: Off</button></span><span class="name">${name}</span>${icon('bus', 11, 9)}</div>
    <div class="row"><span class="sel env"><select aria-label="Automation ${name}"><option>Lautstärke</option></select></span><span class="name">${out}</span></div></div></div>`;
  const mute = no < 6 ? 'mute' : no > 16 ? 'mute2' : '';
  const solo = no >= 6 && no <= 16 ? 'solo' : '';
  return open(no === 6 ? 'sel-track' : '') + `<span class="no">${no}</span><div class="body">
    <div class="row"><span class="btns"><button class="${mute}">M</button><button class="${solo}">S</button><button aria-label="Aufnahme">${icon('dot')}</button><button aria-label="Monitor">${icon('mon')}</button></span><span class="name">${name}</span>${icon('wave', 11, 10)}</div>
    <input class="vol" type="range" aria-label="Pegel ${name}" style="--v:${no > 16 ? 67 : 75}%"></div></div>`;
}
function lane([no, , c]) {
  if (no === 'bus') return '<div class="lane dark"></div>';
  const [clips, stereo] = waves[no], centers = stereo ? [6.500, 19] : [12.500];
  const mid = centers.map(y => `M0 ${Math.round(y) + .5}H966`).join('');
  return `<div class="lane" style="--lane:${c[2]};--ink:${c[3]}"><svg viewBox="0 0 966 27" preserveAspectRatio="none"><path class="mid" d="${mid}"/><path d="${clipPath(clips, centers)}"/></svg></div>`;
}
document.getElementById('tracks').innerHTML = tracks.map(header).join('');
document.getElementById('lanes').innerHTML = tracks.map(lane).join('');
document.getElementById('ruler').innerHTML = '<span>7</span>' + range(19, i => `<span>${81 + i * 4}</span>`).join('');
const lines = (start, step) => range(40, i => start + i * step).filter(x => x < WIDTH).map(x => `M${x.toFixed(1)} 0V622`).join('');
document.getElementById('grid').innerHTML = `<path stroke-opacity=".12" d="${lines(45.700, BAR4)}"/><path stroke-opacity=".05" d="${lines(20.500, BAR4)}"/>`;
```
